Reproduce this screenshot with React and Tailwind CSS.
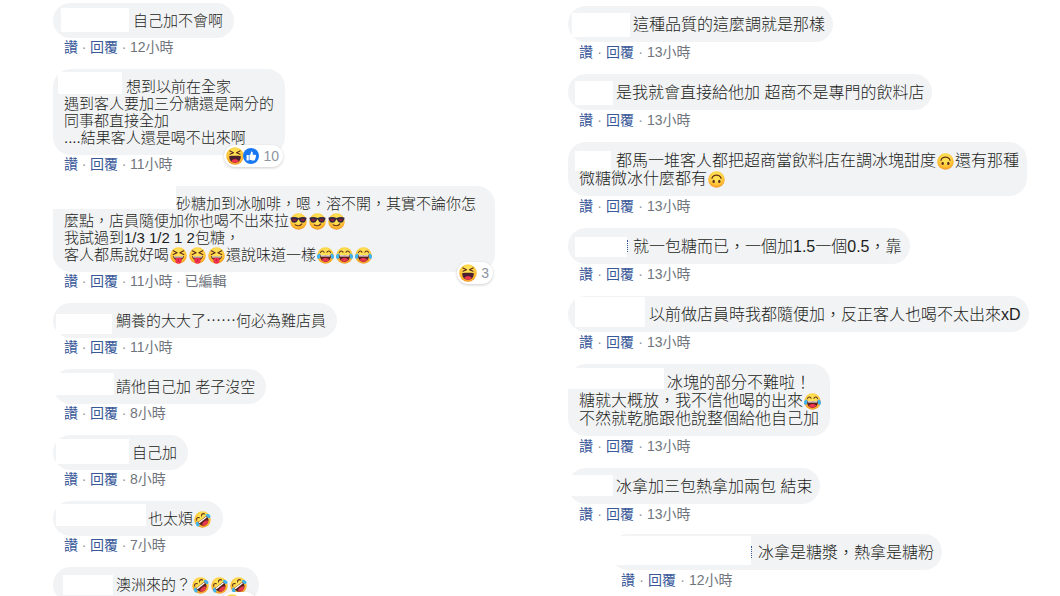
import clsx from "clsx";

function Face({ className, children }) {
  return (
    <svg viewBox="0 0 36 36" className={className} aria-hidden="true">
      <defs>
        <radialGradient id="face" cx="50%" cy="35%" r="68%">
          <stop offset="0.35" stopColor="#ffe052" />
          <stop offset="0.75" stopColor="#fcb92f" />
          <stop offset="1" stopColor="#f08a24" />
        </radialGradient>
      </defs>
      <circle cx="18" cy="18" r="17.500" fill="url(#face)" />
      {children}
    </svg>
  );
}

function LaughingFace() {
  return (
    <>
      <path d="M7.500 11.500c1.500-4 6-4 7.500-.5M21 11c1.500-3.500 6-3.500 7.500.5" fill="none" stroke="#5d2a1c" strokeWidth="2.200" strokeLinecap="round" />
      <path d="M6.500 16.500c4 1 19 1 23 0 .8 9-4 15-11.500 15s-12.300-6-11.500-15Z" fill="#5d1f1c" />
      <path d="M7.500 17c4 1 17 1 21 0l-.8 3.200H8.300Z" fill="#fff" />
      <path d="M10 27.500c3-5.500 13-5.500 16 0-4 5-12 5-16 0Z" fill="#e8364f" />
      <path d="M7 14C3 13.500-.5 17 0 21.500c.5 4 5.500 4.500 6.500.5Z" fill="#3fb4ee" />
      <path d="M29 14c4-.5 7.500 3 7 7.500-.5 4-5.500 4.500-6.500.5Z" fill="#3fb4ee" />
    </>
  );
}

const EMOJI = {
  joy: <LaughingFace />,
  rofl: (
    <g transform="rotate(-38 18 18)">
      <LaughingFace />
    </g>
  ),
  cool: (
    <>
      <path d="M1 10c5-2 12-1.500 17 .5 5-2 12-2.500 17-.5l-.5 3.500c-1 0-1 1-1.500 3-1 5-11 5.500-13 0-.6-1.800-.8-2.500-2-2.500s-1.400.7-2 2.500c-2 5.500-12 5-13 0-.5-2-.5-3-1.500-3Z" fill="#30263f" />
      <path d="M5 13c3-1 7-.8 9 .5-1 5-8 5.500-9 1ZM22 13.500c2-1.300 6-1.500 9-.5 0 5-8 5.500-9 .5Z" fill="#8a1f3f" />
      <path d="M11 25c5 3.500 11 2.500 14-2" fill="none" stroke="#6b3217" strokeWidth="2.400" strokeLinecap="round" />
    </>
  ),
  tongue: (
    <>
      <path d="M7 8l8 4-8 4M29 8l-8 4 8 4" fill="none" stroke="#5d2a1c" strokeWidth="2.400" strokeLinecap="round" strokeLinejoin="round" />
      <path d="M6.500 19c4 1.500 19 1.500 23 0 0 6-5 9-11.500 9s-11.500-3-11.500-9Z" fill="#5d2a1c" />
      <path d="M8 19.500c4 1 16 1 20 0l-.7 2.700H8.700Z" fill="#fff" />
      <path d="M11.500 24c3-1.500 10-1.500 13 0v5c0 8-13 8-13 0Z" fill="#ee3050" />
      <path d="M18 25v5" stroke="#b81f3c" strokeWidth="1.500" />
    </>
  ),
  flipped: (
    <>
      <path d="M8.500 15.500c2-9 17-9 19 0" fill="none" stroke="#6b3217" strokeWidth="2.600" strokeLinecap="round" />
      <ellipse cx="12" cy="22" rx="2.500" ry="3.600" fill="#5d2a1c" />
      <ellipse cx="24" cy="22" rx="2.500" ry="3.600" fill="#5d2a1c" />
    </>
  ),
  haha: (
    <>
      <path d="M8 8l7 3.500-7 3M28 8l-7 3.500 7 3" fill="none" stroke="#5d2a1c" strokeWidth="2.400" strokeLinecap="round" strokeLinejoin="round" />
      <path d="M6.500 18c4-.8 19-.8 23 0 .5 8-4 13.500-11.500 13.500S6 26 6.500 18Z" fill="#4b2130" />
      <path d="M10.500 28c3-4.500 12-4.500 15 0-4 4.600-11 4.600-15 0Z" fill="#f2364f" />
    </>
  ),
};

function Emoji({ name }) {
  return (
    <span className="inline-block size-[17px] mx-px -my-1 align-baseline">
      <Face className="block size-full">{EMOJI[name]}</Face>
    </span>
  );
}

function LikeIcon() {
  return (
    <svg viewBox="0 0 36 36" className="-ml-px size-4" aria-hidden="true">
      <circle cx="18" cy="18" r="18" fill="#1778f2" />
      <path d="M8 16h5v12H8ZM14.500 16.500c3-2 3.500-5 3.500-8.500 3.500-1 5 3 3.500 7h6c2 0 2.500 2.500 1 3.500 1 1.300.6 2.800-.5 3.300.6 1.400 0 2.500-1 3 .2 2-1 3.200-3 3.200-4 0-7 0-9.500-1.500Z" fill="#fff" />
    </svg>
  );
}

function Reactions({ count, like }) {
  return (
    <div className="absolute right-[2px] -bottom-3 flex h-[22px] items-center rounded-full bg-white pl-[2px] pr-1 shadow-[0_1px_3px_rgba(0,0,0,0.2)]">
      <Face className="size-[18px]">{EMOJI.haha}</Face>
      {like && <LikeIcon />}
      <span className="ml-1 text-sm leading-none text-[#8d949e]">{count}</span>
    </div>
  );
}

const leftComments = [
  {
    mask: "left-2 top-[5px] h-6 w-[68px]",
    indent: "indent-[69px]",
    lines: ["自己加不會啊"],
    time: "12小時",
  },
  {
    mask: "left-[5px] top-[3px] h-[22px] w-16",
    indent: "indent-[62px]",
    lines: ["想到以前在全家", "遇到客人要加三分糖還是兩分的", "同事都直接全加", "....結果客人還是喝不出來啊"],
    time: "11小時",
    reactions: { count: 10, like: true },
  },
  {
    mask: "left-0 top-0 h-[23px] w-[123px]",
    indent: "indent-[112px]",
    width: "min-w-[442px]",
    lines: [
      "砂糖加到冰咖啡，嗯，溶不開，其實不論你怎",
      ["麼點，店員隨便加你也喝不出來拉", "cool", "cool", "cool"],
      "我試過到1/3 1/2 1 2包糖，",
      ["客人都馬說好喝", "tongue", "tongue", "tongue", "還說味道一樣", "joy", "joy", "joy"],
    ],
    time: "11小時",
    edited: true,
    reactions: { count: 3 },
  },
  {
    mask: "left-[3px] top-[11px] h-5 w-14",
    indent: "indent-[52px]",
    lines: ["鯛養的大大了⋯⋯何必為難店員"],
    time: "11小時",
  },
  {
    mask: "left-0 top-1 h-[22px] w-[61px]",
    indent: "indent-[52px]",
    lines: ["請他自己加 老子沒空"],
    time: "8小時",
  },
  {
    mask: "left-[3px] top-1 h-[25px] w-[73px]",
    indent: "indent-[68px]",
    lines: ["自己加"],
    time: "8小時",
  },
  {
    mask: "left-[3px] top-[3px] h-[22px] w-[90px]",
    indent: "indent-[84px]",
    lines: [["也太煩", "rofl"]],
    time: "7小時",
  },
  {
    mask: "left-[10px] top-2 h-5 w-[50px]",
    indent: "indent-[52px]",
    lines: [["澳洲來的？", "rofl", "rofl", "rofl"]],
    reactions: { count: 4 },
  },
];

const rightComments = [
  {
    mask: "left-1 top-[7px] h-6 w-[58px]",
    indent: "indent-[54px]",
    lines: ["這種品質的這麼調就是那樣"],
    time: "13小時",
  },
  {
    mask: "left-[7px] top-[7px] h-6 w-[38px]",
    indent: "indent-[37px]",
    lines: ["是我就會直接給他加 超商不是專門的飲料店"],
    time: "13小時",
  },
  {
    mask: "left-[7px] top-[9px] h-5 w-9",
    indent: "indent-[37px]",
    lines: [
      ["都馬一堆客人都把超商當飲料店在調冰塊甜度", "flipped", "還有那種"],
      ["微糖微冰什麼都有", "flipped"],
    ],
    time: "13小時",
  },
  {
    mask: "left-[7px] top-[9px] h-5 w-[52px]",
    edge: "left-[59px]",
    indent: "indent-[54px]",
    lines: ["就一包糖而已，一個加1.5一個0.5，靠"],
    time: "13小時",
  },
  {
    mask: "left-[7px] top-px h-[30px] w-[70px]",
    indent: "indent-[70px]",
    lines: ["以前做店員時我都隨便加，反正客人也喝不太出來xD"],
    time: "13小時",
  },
  {
    mask: "left-0 top-1 h-[21px] w-24",
    indent: "indent-[88px]",
    lines: ["冰塊的部分不難啦！", ["糖就大概放，我不信他喝的出來", "joy"], "不然就乾脆跟他說整個給他自己加"],
    time: "13小時",
  },
  {
    mask: "left-0 top-[7px] h-[21px] w-[45px]",
    indent: "indent-[37px]",
    lines: ["冰拿加三包熱拿加兩包 結束"],
    time: "13小時",
  },
  {
    mask: "left-0 top-[2px] h-[29px] w-[141px]",
    edge: "left-[141px]",
    indent: "indent-[137px]",
    lines: ["冰拿是糖漿，熱拿是糖粉"],
    time: "12小時",
    nested: true,
  },
];

function Line({ parts, className }) {
  return (
    <span className={clsx("block", className)}>
      {[].concat(parts).map((part, i) => (EMOJI[part] ? <Emoji key={i} name={part} /> : part))}
    </span>
  );
}

function Dot({ large }) {
  return <span className={clsx("text-center text-[#90949c]", large ? "w-[13px]" : "w-3")}>·</span>;
}

function Meta({ time, edited, large }) {
  return (
    <div
      className={clsx(
        "flex pl-[11px] text-sm font-normal text-[#70757d]",
        large ? "leading-5" : "leading-[18px]"
      )}
    >
      <button type="button" className="text-[#385898] hover:underline">讚</button>
      <Dot large={large} />
      <button type="button" className="text-[#385898] hover:underline">回覆</button>
      <Dot large={large} />
      <span>{time}</span>
      {edited && (
        <>
          <Dot />
          <span>已編輯</span>
        </>
      )}
    </div>
  );
}

function Comment({ comment, large }) {
  const { mask, edge, indent, width, lines, time, edited, reactions, nested } = comment;

  return (
    <li className={clsx("flex flex-col items-start", large ? "pb-3" : "pb-[13px]", nested && "-mt-[2px] ml-[42px]")}>
      <div
        className={clsx(
          "relative rounded-[18px] bg-[#f2f3f5] pl-[11px] whitespace-nowrap text-[#1c1e21]",
          large ? "pt-[10px] pr-2 pb-2 text-base leading-[18px]" : "py-[9px] pr-[11px] text-[15px] leading-[17px]",
          width
        )}
      >
        {/* hidden author name */}
        <span className={clsx("absolute bg-white", mask)} />
        {edge && <span className={clsx("absolute top-3 h-3 border-l border-dotted border-[#385898]", edge)} />}
        <p>
          {lines.map((line, i) => (
            <Line key={i} parts={line} className={i === 0 && indent} />
          ))}
        </p>
        {reactions && <Reactions {...reactions} />}
      </div>
      {time && <Meta time={time} edited={edited} large={large} />}
    </li>
  );
}

export default function App() {
  return (
    <main
      lang="zh-Hant"
      className="grid h-screen grid-cols-2 overflow-hidden bg-white font-['Liberation_Sans','Noto_Sans_CJK_TC',sans-serif] font-light"
    >
      <ul className="min-w-0 pt-[3px] pl-[53px]">
        {leftComments.map((comment, i) => (
          <Comment key={i} comment={comment} />
        ))}
      </ul>
      <ul className="min-w-0 pt-[6px] pl-[38px]">
        {rightComments.map((comment, i) => (
          <Comment key={i} comment={comment} large />
        ))}
      </ul>
    </main>
  );
}
